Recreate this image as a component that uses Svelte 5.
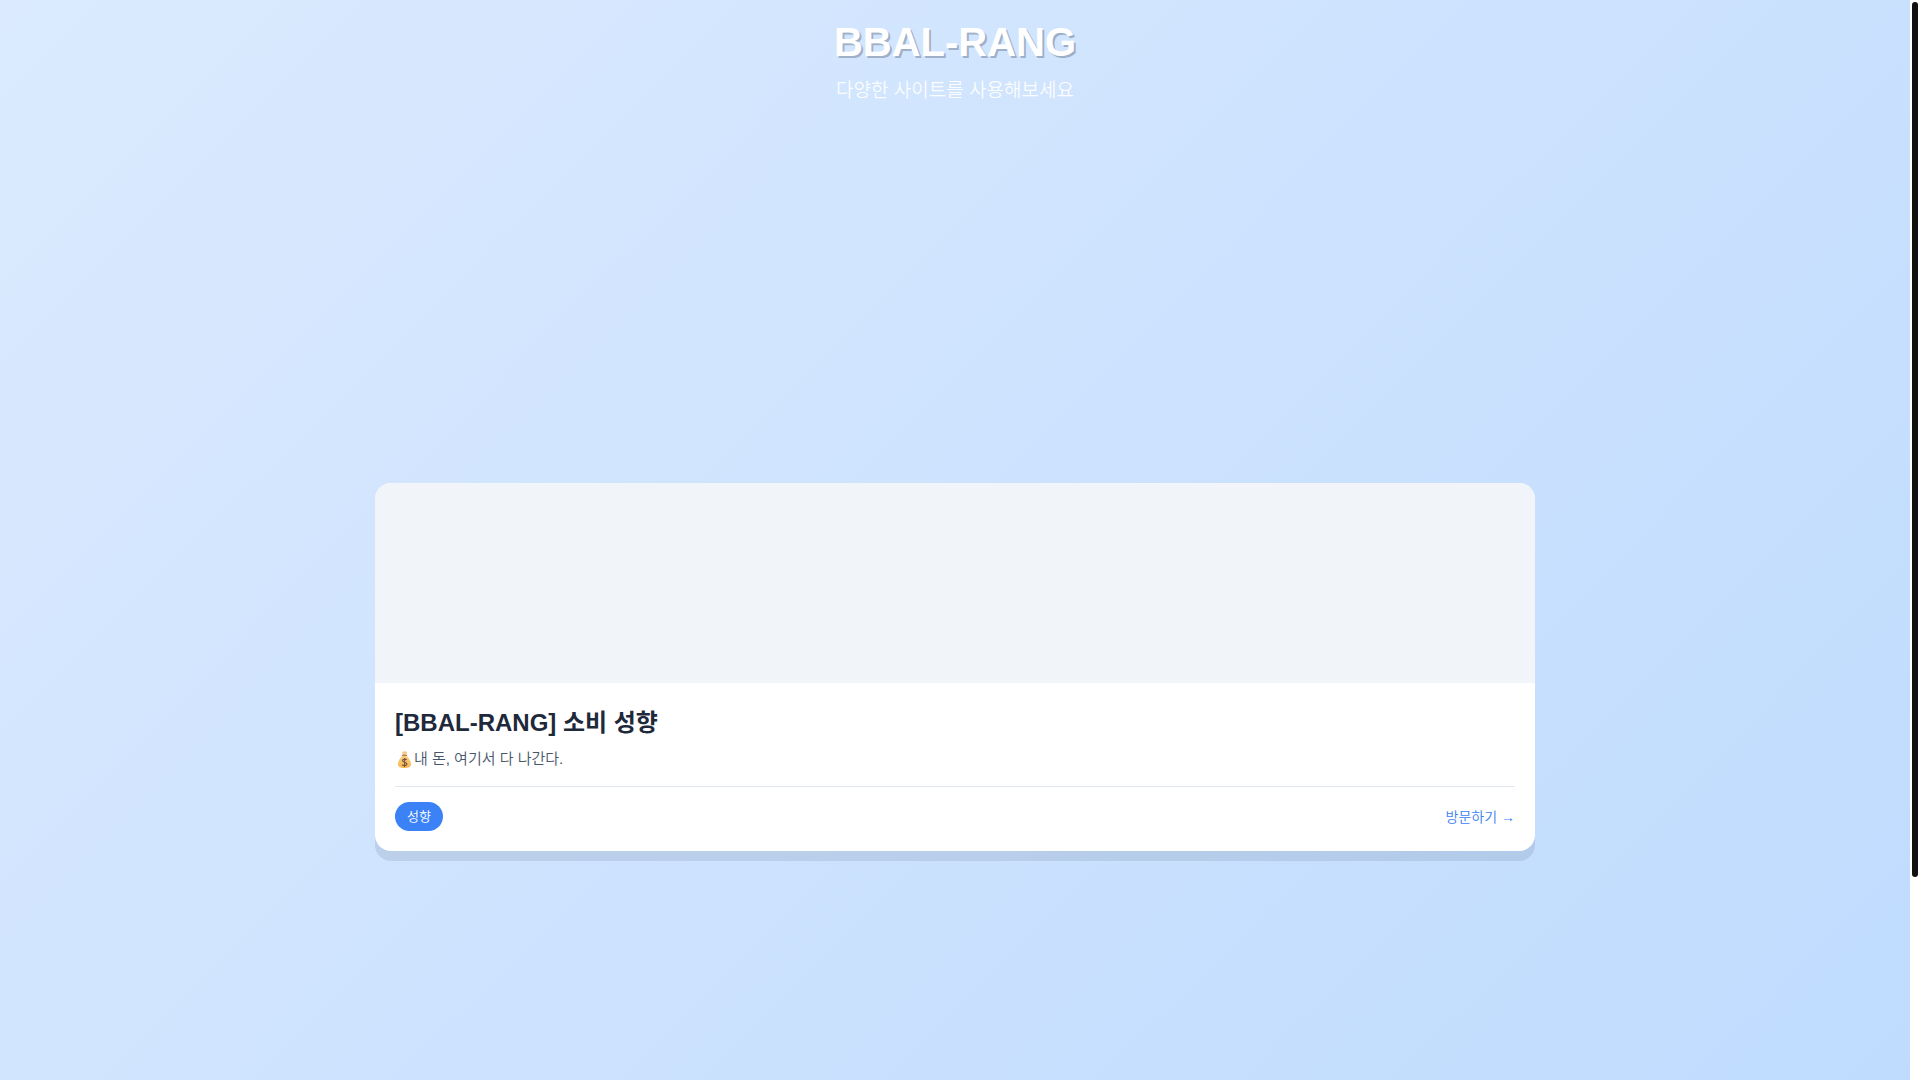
<script>
  const sites = [
    {
      title: '[BBAL-RANG] 소비 성향',
      description: '내 돈, 여기서 다 나간다.',
      tag: '성향',
      link: '방문하기 →'
    }
  ];
</script>

<div class="shell">
  <div class="page">
    <header>
      <h1>BBAL-RANG</h1>
      <p>다양한 사이트를 사용해보세요</p>
    </header>
    <main>
      {#each sites as site}
        <article class="card">
          <div class="thumb"></div>
          <div class="body">
            <h2>{site.title}</h2>
            <p class="desc">
              <svg viewBox="0 0 19 19" role="img" aria-label="money bag">
                <defs>
                  <linearGradient id="bag" x1="0" y1="0" x2="0" y2="1">
                    <stop offset="0" stop-color="#f8cf86" />
                    <stop offset="1" stop-color="#f9b84c" />
                  </linearGradient>
                </defs>
                <path d="M7 2.2Q8 1 9.5 1.4Q11 .9 12.2 2L11.2 5.2H7.8Z" fill="#f3c992" />
                <path d="M7.7 5.6H11.3C13.5 8 16 10.5 16 14C16 17 13.4 18 9.5 18S3 17 3 14C3 10.5 5.5 8 7.7 5.6Z" fill="url(#bag)" />
                <path d="M7.4 5.4H11.6" stroke="#b97a4a" stroke-width="1.2" stroke-linecap="round" />
                <path d="M11.7 9.9C10.8 8.7 7.5 8.8 7.5 10.6C7.5 12.7 11.9 11.8 11.9 14C11.9 16 8.2 16.1 7.2 14.6M9.6 8V16.9" fill="none" stroke="#7b5540" stroke-width="1.2" />
              </svg>{site.description}
            </p>
            <div class="foot">
              <span class="tag">{site.tag}</span>
              <a href="#visit">{site.link}</a>
            </div>
          </div>
        </article>
      {/each}
    </main>
  </div>
  <div class="track" aria-hidden="true"><div class="bar"></div></div>
</div>

<style>
  :global(body) {
    margin: 0;
    font-family: "Liberation Sans", "Noto Sans CJK KR", sans-serif;
    font-weight: 350;
  }
  h1, h2, p { margin: 0; }
  .shell {
    display: flex;
    min-height: 100vh;
  }
  .page {
    flex: 1;
    min-width: 0;
    background: linear-gradient(135deg, #dbeafe 0%, #bfdbfe 100%);
  }
  header {
    padding: 16px 20px 0;
    text-align: center;
    color: #fff;
  }
  h1 {
    font-size: 40px;
    line-height: 52px;
    font-weight: 700;
    text-shadow: 2px 2px 0 rgba(30, 41, 59, 0.3);
  }
  header p {
    margin-top: 8px;
    font-size: 19px;
    line-height: 30px;
    opacity: 0.9;
  }
  main {
    box-sizing: border-box;
    max-width: 1200px;
    margin: 0 auto;
    padding: 377px 20px 40px;
  }
  .card {
    overflow: hidden;
    border-radius: 16px;
    background: #fff;
    box-shadow: 0 10px 0 rgba(30, 41, 59, 0.1);
  }
  .thumb {
    height: 200px;
    background: #f1f5f9;
  }
  .body { padding: 20px; }
  h2 {
    font-size: 24px;
    line-height: 40px;
    color: #1e293b;
  }
  .desc {
    display: flex;
    align-items: center;
    margin-top: 4px;
    font-size: 15px;
    line-height: 24px;
    color: #475569;
  }
  .desc svg {
    flex: none;
    width: 19px;
    height: 19px;
  }
  .foot {
    display: flex;
    align-items: center;
    justify-content: space-between;
    margin-top: 15px;
    padding-top: 15px;
    border-top: 1px solid #e2e8f0;
  }
  .tag {
    padding: 5px 12px 4px;
    border-radius: 20px;
    background: #3b82f6;
    color: #fff;
    font-size: 13px;
    line-height: 20px;
  }
  a {
    color: #3b82f6;
    font-size: 14px;
    line-height: 22px;
    text-decoration: none;
  }
  .track {
    box-sizing: border-box;
    width: 10px;
    padding: 2px;
    background: #fff;
  }
  .bar {
    height: 81vh;
    border-radius: 3px;
    background: #111;
  }
</style>
